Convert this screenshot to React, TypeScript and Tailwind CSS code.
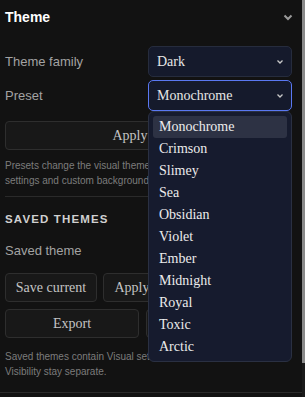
import { useState } from "react";

const presets = [
  "Monochrome",
  "Crimson",
  "Slimey",
  "Sea",
  "Obsidian",
  "Violet",
  "Ember",
  "Midnight",
  "Royal",
  "Toxic",
  "Arctic",
];

function Chevron({ className }: { className?: string }) {
  return (
    <svg width="8" height="6" viewBox="0 0 8 6" className={className}>
      <polyline points="1.5,1.5 4,4 6.5,1.5" fill="none" stroke="currentColor" strokeWidth="1.3" />
    </svg>
  );
}

const sans = "font-['Liberation_Sans',Arial,sans-serif]";
const serif = "font-['Liberation_Serif','Times_New_Roman',serif]";

function Btn({ label, className }: { label: string; className?: string }) {
  return (
    <button
      className={`h-[29px] shrink-0 rounded-[4px] border border-[#2e2e2e] bg-[#181818] text-[14px] text-[#c4c4c4] ${serif} ${className ?? ""}`}
    >
      {label}
    </button>
  );
}

export default function App() {
  const [preset] = useState("Monochrome");

  return (
    <div className="w-[305px] h-[397px] bg-[#121212] flex overflow-hidden">
      <div className="w-[302px] flex flex-col">
        <div className="flex-1 pl-[5px] pr-[10px] overflow-hidden">
          <div className="h-[34px] flex items-center justify-between">
            <span className={`text-[14px] font-bold text-white ${sans}`}>Theme</span>
            <svg width="10" height="7" viewBox="0 0 10 7" className="text-[#9a9a9a] mr-[-1px]">
              <polyline points="1.5,1.5 5,5 8.5,1.5" fill="none" stroke="currentColor" strokeWidth="2" />
            </svg>
          </div>

          <div className="mt-[12px] flex items-center justify-between">
            <span className={`text-[13px] text-[#a3a3a3] ${sans}`}>Theme family</span>
            <div className={`w-[144px] h-[31px] rounded-[5px] border border-[#262c3d] bg-[#151a2c] flex items-center justify-between pl-[8px] pr-[7px] text-[14px] text-[#e6e6e6] ${serif}`}>
              <span>Dark</span>
              <Chevron className="text-[#c8c8c8]" />
            </div>
          </div>

          <div className="mt-[3px] flex items-center justify-between">
            <span className={`text-[13px] text-[#a3a3a3] ${sans}`}>Preset</span>
            <div className="relative">
              <div className={`w-[144px] h-[31px] rounded-[5px] border border-[#5a78f2] bg-[#151a2c] flex items-center justify-between pl-[8px] pr-[7px] text-[14px] text-[#e6e6e6] ${serif}`}>
                <span>{preset}</span>
                <Chevron className="text-[#c8c8c8]" />
              </div>
              <div className={`absolute z-10 left-0 top-[31px] w-[144px] rounded-[6px] border border-[#2a3042] bg-[#161b2e] pt-[4px] pb-[3px] px-[4px] ${serif}`}>
                {presets.map((p) => (
                  <div
                    key={p}
                    className={`h-[22px] flex items-center pl-[6px] pb-[1px] rounded-[3px] text-[14px] text-[#ececec] ${
                      p === preset ? "bg-[#2d3244]" : ""
                    }`}
                  >
                    {p}
                  </div>
                ))}
              </div>
            </div>
          </div>

          <Btn label="Apply" className="mt-[10px] w-[250px] text-[#b9b9b9]" />

          <p className={`mt-[8px] text-[10px] leading-[15px] text-[#7c7c7c] ${sans}`}>
            Presets change the visual theme and accent colors. Layout settings and custom backgrounds are kept.
          </p>

          <div className="mt-[8px] h-px bg-[#2a2a2a]" />

          <div className={`mt-[14px] text-[11.5px] font-bold tracking-[0.1em] text-[#d0d0d0] ${sans}`}>
            SAVED THEMES
          </div>

          <div className="mt-[7px] flex items-center justify-between h-[31px]">
            <span className={`text-[13px] text-[#a3a3a3] ${sans}`}>Saved theme</span>
            <div className="w-[144px] h-[31px] rounded-[5px] border border-[#262c3d] bg-[#151a2c]" />
          </div>

          <div className="mt-[7px] flex gap-[6px]">
            <Btn label="Save current" className="w-[92px]" />
            <Btn label="Apply" className="w-[58px]" />
            <Btn label="Delete" className="w-[70px]" />
          </div>

          <div className="mt-[7px] flex gap-[7px]">
            <Btn label="Export" className="w-[134px]" />
            <Btn label="Import" className="w-[134px]" />
          </div>

          <p className={`mt-[11px] text-[10px] leading-[15px] text-[#7c7c7c] ${sans}`}>
            Saved themes contain Visual settings only. Your Layout and Visibility stay separate.
          </p>
        </div>
        <div className="h-[5px] shrink-0 border-t border-[#2a2a2a]" />
      </div>
      <div className="w-[3px] bg-[#1a1a1a] flex flex-col">
        <div className="h-[363px] bg-[#8a8a8a]" />
      </div>
    </div>
  );
}
